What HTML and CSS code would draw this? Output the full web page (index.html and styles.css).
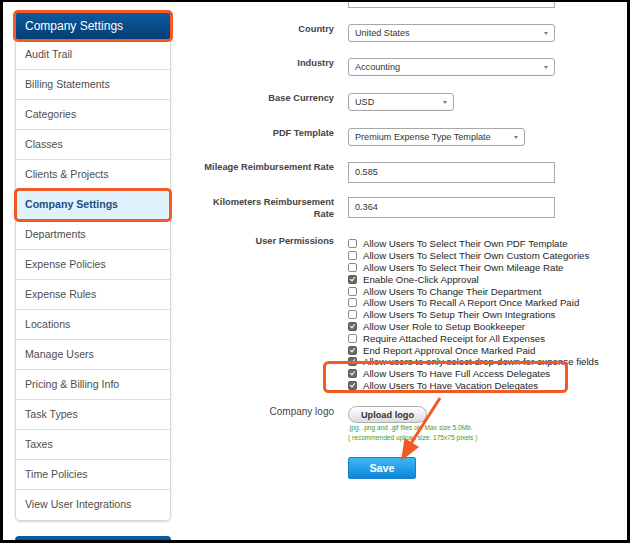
FILE: index.html
```html
<!DOCTYPE html>
<html lang="en">
<head>
  <meta charset="UTF-8" />
  <meta name="viewport" content="width=device-width, initial-scale=1.0" />
  <title>Company Settings</title>
  <link rel="stylesheet" href="styles.css">
</head>
<body>

<div class="frame">
  <div class="sidebar">
    <div class="side-head marked">Company Settings</div>
    <ul class="side-list">
      <li>Audit Trail</li>
      <li>Billing Statements</li>
      <li>Categories</li>
      <li>Classes</li>
      <li>Clients &amp; Projects</li>
      <li class="active marked">Company Settings</li>
      <li>Departments</li>
      <li>Expense Policies</li>
      <li>Expense Rules</li>
      <li>Locations</li>
      <li>Manage Users</li>
      <li>Pricing &amp; Billing Info</li>
      <li>Task Types</li>
      <li>Taxes</li>
      <li>Time Policies</li>
      <li>View User Integrations</li>
    </ul>
    <div class="side-head next"></div>
  </div>

  <div class="content">
    <div class="row row-cut">
      <span class="label"></span>
      <div class="cut-input"></div>
    </div>

    <div class="row gap-16">
      <label class="label">Country</label>
      <div class="select w-wide">United States<span class="caret"></span></div>
    </div>

    <div class="row gap-16">
      <label class="label">Industry</label>
      <div class="select w-wide">Accounting<span class="caret"></span></div>
    </div>

    <div class="row gap-17">
      <label class="label">Base Currency</label>
      <div class="select w-small">USD<span class="caret"></span></div>
    </div>

    <div class="row gap-17">
      <label class="label">PDF Template</label>
      <div class="select w-mid">Premium Expense Type Template<span class="caret"></span></div>
    </div>

    <div class="row gap-16">
      <label class="label">Mileage Reimbursement Rate</label>
      <div class="text-input">0.585</div>
    </div>

    <div class="row gap-14">
      <label class="label">Kilometers Reimbursement Rate</label>
      <div class="text-input">0.364</div>
    </div>

    <div class="row gap-16">
      <label class="label">User Permissions</label>
      <ul class="perms">
        <li><span class="box"></span>Allow Users To Select Their Own PDF Template</li>
        <li><span class="box"></span>Allow Users To Select Their Own Custom Categories</li>
        <li><span class="box"></span>Allow Users To Select Their Own Mileage Rate</li>
        <li><span class="box on"></span>Enable One-Click Approval</li>
        <li><span class="box"></span>Allow Users To Change Their Department</li>
        <li><span class="box"></span>Allow Users To Recall A Report Once Marked Paid</li>
        <li><span class="box"></span>Allow Users To Setup Their Own Integrations</li>
        <li><span class="box on"></span>Allow User Role to Setup Bookkeeper</li>
        <li><span class="box"></span>Require Attached Receipt for All Expenses</li>
        <li><span class="box on"></span>End Report Approval Once Marked Paid</li>
        <li><span class="box on"></span>Allow users to only select drop-down for expense fields</li>
        <li><span class="box on"></span>Allow Users To Have Full Access Delegates</li>
        <li><span class="box on"></span>Allow Users To Have Vacation Delegates</li>
      </ul>
    </div>

    <div class="row gap-15">
      <label class="label plain">Company logo</label>
      <div class="logo-field">
        <button type="button" class="upload">Upload logo</button>
        <div class="note">.jpg, .png and .gif files ok. Max size 5.0Mb.</div>
        <div class="note">( recommended upload size: 175x75 pixels )</div>
      </div>
    </div>

    <div class="row gap-14">
      <span class="label"></span>
      <button type="button" class="save">Save</button>
    </div>
  </div>

  <svg class="notes" width="624" height="538" viewBox="0 0 624 538">
    <rect x="321.5" y="360.5" width="242" height="29" rx="4" fill="none" stroke="#f15a24" stroke-width="3"/>
    <line x1="437" y1="396" x2="407" y2="443" stroke="#f15a24" stroke-width="3"/>
    <polygon points="398,459 416,445 401.5,436" fill="#f15a24"/>
  </svg>
</div>

</body>
</html>
```

FILE: styles.css
```css
/* pagina de ajustes */
body {
  margin: 0;
  padding: 0;
  font-family: 'Liberation Sans', Arial, sans-serif;
  background: #fff;
}

.frame {
  position: relative;
  width: 630px;
  height: 543px;
  box-sizing: border-box;
  border: 3px solid #000;
  border-top-width: 2px;
  overflow: hidden;
  display: flex;
  align-items: flex-start;
}

/* menu lateral */
.sidebar {
  width: 156px;
  margin: 10px 0 0 12px;
  flex-shrink: 0;
}

.side-head {
  height: 28px;
  line-height: 28px;
  padding-left: 10px;
  color: #fff;
  font-size: 12px;
  background: linear-gradient(to bottom, #0e5b9f, #033c74);
  border-radius: 4px 4px 0 0;
}

.side-head.next {
  margin-top: 15px;
  height: 20px;
}

.marked {
  outline: 3px solid #f15a24;
  outline-offset: -1px;
  border-radius: 3px;
  position: relative;
  z-index: 1;
}

.side-list {
  list-style: none;
  margin: 0;
  padding: 0;
  border: 1px solid #d6d6d6;
  border-top: none;
  border-radius: 0 0 5px 5px;
  box-shadow: 0 1px 2px rgba(0, 0, 0, 0.15);
}

.side-list li {
  height: 29px;
  line-height: 29px;
  padding-left: 9px;
  font-size: 10.6px;
  color: #4e4e4e;
  border-bottom: 1px solid #dedede;
}

.side-list li:last-child {
  height: 30px;
  border-bottom: none;
}

.side-list li.active {
  background-color: #e0f3fc;
  color: #1d4f80;
  font-weight: bold;
}

/* formulario */
.content {
  padding-left: 27px;
}

.row {
  display: flex;
  align-items: flex-start;
  gap: 14px;
}

.gap-14 { margin-top: 14px; }
.gap-15 { margin-top: 15px; }
.gap-16 { margin-top: 16px; }
.gap-17 { margin-top: 17px; }

.label {
  width: 136px;
  flex-shrink: 0;
  text-align: right;
  font-size: 9.3px;
  font-weight: bold;
  line-height: 12px;
  margin-top: -1px;
  color: #444;
}

.label.plain {
  font-weight: normal;
  font-size: 10px;
  margin-top: 0;
}

.cut-input {
  width: 207px;
  height: 6px;
  box-sizing: border-box;
  border: 1px solid #aaa;
  border-top: none;
}

.select, .text-input {
  position: relative;
  box-sizing: border-box;
  border: 1px solid #a8a8a8;
  padding-left: 6px;
  font-size: 9.1px;
  color: #333;
  background: #fff;
}

.select {
  height: 18px;
  line-height: 16px;
  border-radius: 3px;
  box-shadow: inset 0 -1px 1px rgba(0, 0, 0, 0.04);
}

.w-wide { width: 207px; }
.w-small { width: 106px; }
.w-mid { width: 177px; }

.caret {
  position: absolute;
  right: 6px;
  top: 7px;
  border-left: 2.5px solid transparent;
  border-right: 2.5px solid transparent;
  border-top: 3px solid #7a7a7a;
}

.text-input {
  width: 207px;
  height: 21px;
  line-height: 19px;
}

.perms {
  list-style: none;
  margin: 2px 0 0 0;
  padding: 0;
}

.perms li {
  display: flex;
  align-items: center;
  gap: 6px;
  height: 11.8px;
  font-size: 9.7px;
  color: #262626;
  white-space: nowrap;
}

.box {
  width: 9px;
  height: 9px;
  box-sizing: border-box;
  border: 1px solid #8a8a8a;
  border-radius: 2px;
  background: #fff;
  position: relative;
  flex-shrink: 0;
}

.box.on {
  background: #6a6a6a;
  border-color: #5e5e5e;
}

.box.on::after {
  content: '';
  position: absolute;
  left: 2px;
  top: 0px;
  width: 2px;
  height: 4px;
  border-right: 1.3px solid #fff;
  border-bottom: 1.3px solid #fff;
  transform: rotate(40deg);
}

.upload {
  display: block;
  width: 79px;
  height: 17px;
  padding: 0;
  border: 1px solid #b0b0b0;
  border-radius: 9px;
  background: linear-gradient(to bottom, #ffffff, #dcdcdc);
  font-family: inherit;
  font-size: 9.2px;
  font-weight: bold;
  color: #333;
}

.note {
  font-size: 6.6px;
  line-height: 10px;
  color: #3d9b35;
  white-space: nowrap;
}

.save {
  width: 68px;
  height: 22px;
  padding: 0;
  border: 1px solid #1b7fc8;
  border-radius: 2px;
  background: linear-gradient(to bottom, #40b8f6, #0b87dc);
  font-family: inherit;
  font-size: 10.8px;
  font-weight: bold;
  color: #fff;
}

/* anotaciones naranjas */
.notes {
  position: absolute;
  left: 0;
  top: 0;
  pointer-events: none;
}
```
